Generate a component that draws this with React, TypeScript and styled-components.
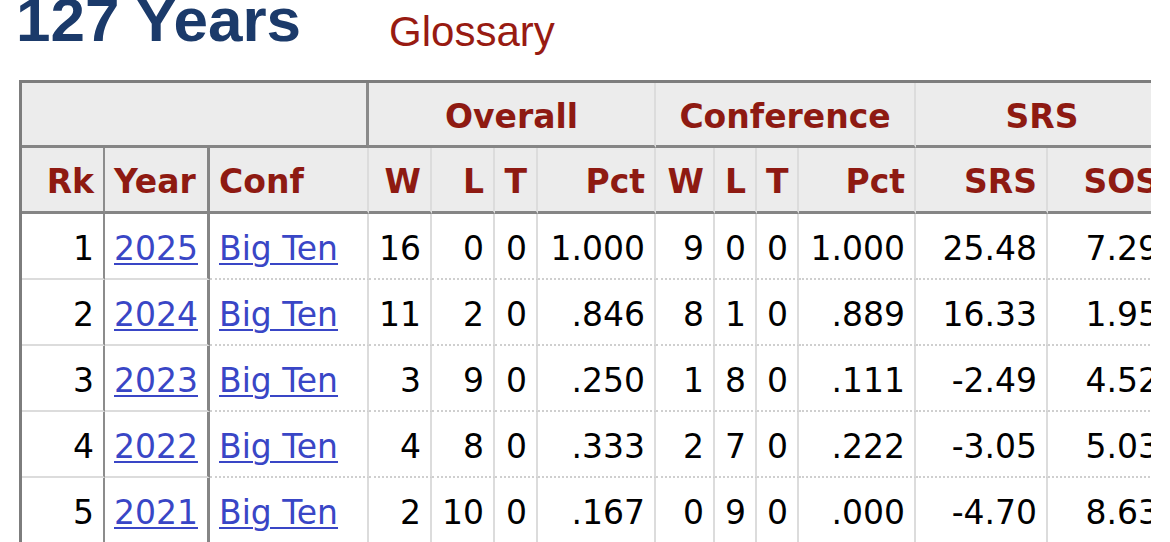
import React from 'react'
import styled, { createGlobalStyle } from 'styled-components'

const GlobalStyle = createGlobalStyle`
  html, body {
    margin: 0;
    padding: 0;
    background: #fff;
  }
  body {
    font-family: 'DejaVu Sans', Verdana, sans-serif;
    overflow: hidden;
  }
`

type Row = {
  rk: number
  year: string
  conf: string
  w: number
  l: number
  t: number
  pct: string
  cw: number
  cl: number
  ct: number
  cpct: string
  srs: string
  sos: string
}

const rows: Row[] = [
  { rk: 1, year: '2025', conf: 'Big Ten', w: 16, l: 0, t: 0, pct: '1.000', cw: 9, cl: 0, ct: 0, cpct: '1.000', srs: '25.48', sos: '7.29' },
  { rk: 2, year: '2024', conf: 'Big Ten', w: 11, l: 2, t: 0, pct: '.846', cw: 8, cl: 1, ct: 0, cpct: '.889', srs: '16.33', sos: '1.95' },
  { rk: 3, year: '2023', conf: 'Big Ten', w: 3, l: 9, t: 0, pct: '.250', cw: 1, cl: 8, ct: 0, cpct: '.111', srs: '-2.49', sos: '4.52' },
  { rk: 4, year: '2022', conf: 'Big Ten', w: 4, l: 8, t: 0, pct: '.333', cw: 2, cl: 7, ct: 0, cpct: '.222', srs: '-3.05', sos: '5.03' },
  { rk: 5, year: '2021', conf: 'Big Ten', w: 2, l: 10, t: 0, pct: '.167', cw: 0, cl: 9, ct: 0, cpct: '.000', srs: '-4.70', sos: '8.63' },
]

// column widths in px (border-box)
const colWidths = [83, 105, 159, 63, 63, 43, 118, 59, 42, 42, 117, 132, 122]

const App: React.FC = () => {
  return (
    <>
      <GlobalStyle />
      <Page>
        <TitleBar>
          <Title>127 Years</Title>
          <GlossaryLink>Glossary</GlossaryLink>
        </TitleBar>
        <TableClip>
          <Table>
            <colgroup>
              {colWidths.map((w, i) => (
                <col key={i} style={{ width: w }} />
              ))}
            </colgroup>
            <thead>
              <tr>
                <OverHead colSpan={3} $strong />
                <OverHead colSpan={4}>Overall</OverHead>
                <OverHead colSpan={4}>Conference</OverHead>
                <OverHead colSpan={2}>SRS</OverHead>
              </tr>
              <tr>
                <HeadCell $sep="dark">Rk</HeadCell>
                <HeadCell $sep="thick" $align="left">Year</HeadCell>
                <HeadCell $align="left">Conf</HeadCell>
                <HeadCell>W</HeadCell>
                <HeadCell>L</HeadCell>
                <HeadCell>T</HeadCell>
                <HeadCell>Pct</HeadCell>
                <HeadCell>W</HeadCell>
                <HeadCell>L</HeadCell>
                <HeadCell>T</HeadCell>
                <HeadCell>Pct</HeadCell>
                <HeadCell>SRS</HeadCell>
                <HeadCell>SOS</HeadCell>
              </tr>
            </thead>
            <tbody>
              {rows.map((r) => (
                <tr key={r.rk}>
                  <FrozenCell $sep="dark">{r.rk}</FrozenCell>
                  <FrozenCell $sep="thick" $align="left">
                    <Link href="#">{r.year}</Link>
                  </FrozenCell>
                  <Cell $align="left">
                    <Link href="#">{r.conf}</Link>
                  </Cell>
                  <Cell>{r.w}</Cell>
                  <Cell>{r.l}</Cell>
                  <Cell>{r.t}</Cell>
                  <Cell>{r.pct}</Cell>
                  <Cell>{r.cw}</Cell>
                  <Cell>{r.cl}</Cell>
                  <Cell>{r.ct}</Cell>
                  <Cell>{r.cpct}</Cell>
                  <Cell>{r.srs}</Cell>
                  <Cell>{r.sos}</Cell>
                </tr>
              ))}
            </tbody>
          </Table>
        </TableClip>
      </Page>
    </>
  )
}

export default App

type Sep = 'light' | 'dark' | 'thick'

const sepBorder = (sep: Sep = 'light') => {
  if (sep === 'thick') return '3px solid #858585'
  if (sep === 'dark') return '2px solid #8c8c8c'
  return '2px solid #dcdcdc'
}

const Page = styled.div`
  width: 1170px;
  height: 542px;
  overflow: hidden;
`

const TitleBar = styled.div`
  display: flex;
  align-items: flex-start;
  height: 80px;
  padding-left: 16px;
`

const Title = styled.h1`
  margin: -10px 0 0;
  font-family: 'Liberation Sans', Arial, sans-serif;
  font-weight: 700;
  font-size: 62px;
  line-height: 60px;
  color: #1b3a6a;
`

const GlossaryLink = styled.a`
  margin: 7px 0 0 88px;
  font-family: 'Liberation Sans', Arial, sans-serif;
  font-size: 42px;
  line-height: 50px;
  color: #981b12;
  text-decoration: none;
`

const TableClip = styled.div`
  width: 1132px;
  margin-left: 19px;
  overflow: hidden;
`

const Table = styled.table`
  table-layout: fixed;
  width: 1151px;
  border-collapse: separate;
  border-spacing: 0;
  border-top: 3px solid #7d7d7d;
  border-left: 3px solid #7d7d7d;
  font-size: 33px;
  color: #000;
`

const OverHead = styled.th<{ $strong?: boolean }>`
  box-sizing: border-box;
  height: 65px;
  padding: 5px 0 0;
  background: #ececec;
  color: #8e1a12;
  font-weight: 700;
  text-align: center;
  vertical-align: middle;
  border-bottom: 3px solid #858585;
  border-right: ${(p) => (p.$strong ? '3px solid #8a8a8a' : '2px solid #dcdcdc')};
`

const HeadCell = styled.th<{ $sep?: Sep; $align?: 'left' | 'right' }>`
  box-sizing: border-box;
  height: 66px;
  padding: 4px 9px 0;
  background: #ececec;
  color: #8e1a12;
  font-weight: 700;
  white-space: nowrap;
  text-align: ${(p) => p.$align ?? 'right'};
  vertical-align: middle;
  border-bottom: 3px solid #858585;
  border-right: ${(p) => sepBorder(p.$sep)};
`

const Cell = styled.td<{ $align?: 'left' | 'right' }>`
  box-sizing: border-box;
  height: 66px;
  padding: 4px 9px 0;
  white-space: nowrap;
  text-align: ${(p) => p.$align ?? 'right'};
  vertical-align: middle;
  border-bottom: 2px dotted #cfcfcf;
  border-right: 2px solid #dcdcdc;
`

const FrozenCell = styled(Cell)<{ $sep?: Sep }>`
  border-bottom: 2px solid #dcdcdc;
  border-right: ${(p) => sepBorder(p.$sep)};
`

const Link = styled.a`
  color: #3946c6;
  text-decoration: underline;
  text-decoration-thickness: 2px;
  text-underline-offset: 3px;
`
